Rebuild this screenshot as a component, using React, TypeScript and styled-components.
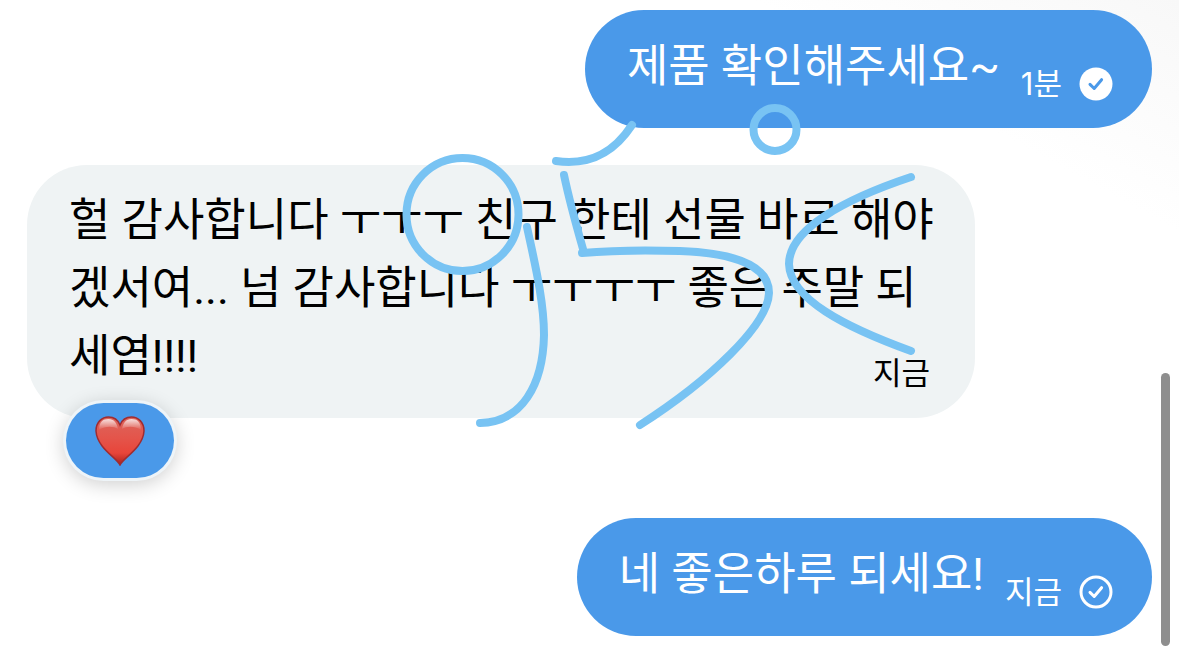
import React from "react";
import styled, { createGlobalStyle } from "styled-components";

const GlobalStyle = createGlobalStyle`
  * { box-sizing: border-box; }
  body {
    margin: 0;
    background: #fff;
    font-family: Roboto, "Noto Sans CJK KR", sans-serif;
  }
`;

const Screen = styled.main`
  position: relative;
  min-height: 100vh;
  padding: 10px 27px;
  background: linear-gradient(to bottom left, #f8f8f8 0%, #fff 18%);
`;

const Thread = styled.ol`
  display: flex;
  flex-direction: column;
  margin: 0;
  padding: 0;
  list-style: none;
`;

const Item = styled.li<{ $sent?: boolean; $gap?: number }>`
  display: flex;
  justify-content: ${(p) => (p.$sent ? "flex-end" : "flex-start")};
  margin-top: ${(p) => p.$gap ?? 0}px;
`;

const SentBubble = styled.article`
  display: flex;
  align-items: flex-end;
  gap: 21px;
  padding: 23px 39px 27px 42px;
  border-radius: 60px;
  background: #4a99e9;
  color: #fff;
`;

const ReceivedBubble = styled.article`
  position: relative;
  display: grid;
  width: 948px;
  max-width: 100%;
  padding: 22px 40px 27px 42px;
  border-radius: 60px;
  background: #eff3f4;
  color: #000;
`;

const Message = styled.p`
  grid-area: 1 / 1;
  margin: 0;
  font-size: 45px;
  line-height: 68px;
`;

const Meta = styled.footer<{ $received?: boolean }>`
  grid-area: 1 / 1;
  align-self: end;
  justify-self: end;
  display: flex;
  align-items: center;
  gap: 17px;
  padding: ${(p) => (p.$received ? "0 5px 2px 0" : "0")};
`;

const Time = styled.time`
  font-family: Inter, "Noto Sans CJK KR", sans-serif;
  font-size: 31px;
  line-height: 32px;
  white-space: nowrap;
`;

const Status = styled.svg`
  flex: none;
  width: 34px;
  height: 34px;
`;

const Reaction = styled.button`
  position: absolute;
  left: 39px;
  bottom: -60px;
  display: grid;
  place-items: center;
  width: 108px;
  height: 75px;
  padding: 0;
  border: 0;
  border-radius: 38px;
  background: #4a99e9;
  box-shadow: 0 0 0 3px #eef4f8, 0 4px 20px 2px rgba(0, 0, 0, 0.2);
`;

const ScrollThumb = styled.div`
  position: absolute;
  top: 373px;
  right: 9px;
  bottom: 0;
  width: 9px;
  border-radius: 5px;
  background: #8e8e8e;
`;

const Doodle = styled.svg`
  position: absolute;
  top: 0;
  left: 0;
  width: 100%;
  pointer-events: none;
`;

const Check = ({ color }: { color: string }) => (
  <path
    d="M11 17.4l4.2 4.1 7.4-8.8"
    fill="none"
    stroke={color}
    strokeWidth="3"
    strokeLinecap="round"
    strokeLinejoin="round"
  />
);

const ReadIcon = () => (
  <Status viewBox="0 0 34 34" role="img" aria-label="읽음">
    <circle cx="17" cy="17" r="16.5" fill="#fff" />
    <Check color="#4a99e9" />
  </Status>
);

const SentIcon = () => (
  <Status viewBox="0 0 34 34" role="img" aria-label="전송됨">
    <circle cx="17" cy="17" r="15" fill="none" stroke="#fff" strokeWidth="3" />
    <Check color="#fff" />
  </Status>
);

const Heart = () => (
  <svg width="50" height="50" viewBox="0 0 50 50" aria-hidden="true">
    <defs>
      <linearGradient id="body" x1="0" y1="0" x2="0" y2="1">
        <stop offset="0" stopColor="#dc665d" />
        <stop offset="0.45" stopColor="#e4544a" />
        <stop offset="0.75" stopColor="#e8453a" />
        <stop offset="1" stopColor="#a8201d" />
      </linearGradient>
      <linearGradient id="shine" x1="0" y1="0" x2="0" y2="1">
        <stop offset="0" stopColor="#fff" stopOpacity="0.8" />
        <stop offset="1" stopColor="#fff" stopOpacity="0" />
      </linearGradient>
    </defs>
    <path
      d="M25 49C22 42 2 32 1 15C1 6 7 1 13.5 1C19 1 23 4 25 9C27 4 31 1 36.5 1C43 1 49 6 49 15C48 32 28 42 25 49Z"
      fill="url(#body)"
      stroke="#a02c30"
      strokeWidth="1.5"
    />
    <path d="M4 14C4 6 8 3 13.5 3C19 3 22 7 23 13C18 10 10 10 4 14Z" fill="url(#shine)" />
    <path d="M46 14C46 6 42 3 36.5 3C31 3 28 7 27 13C32 10 40 10 46 14Z" fill="url(#shine)" />
  </svg>
);

const Scribble = () => (
  <Doodle viewBox="0 0 1179 646" aria-hidden="true">
    <g fill="none" stroke="#78c3f3" strokeWidth="8" strokeLinecap="round" strokeLinejoin="round">
      <ellipse cx="462.5" cy="214.5" rx="56" ry="56.5" />
      <path d="M527 227C534 260 544 300 544 335C543 385 522 422 480 423" />
      <path d="M556 161C592 166 615 151 632 125" />
      <path d="M564 175C569 199 577 228 583 249" />
      <path d="M582 253C615 250 650 250 680 251C735 253 769 266 769 293C768 325 710 380 640 425" />
      <circle cx="775" cy="129.5" r="21.5" />
      <path d="M911 177C845 199 789 229 789 264C790 299 845 327 911 351" />
    </g>
  </Doodle>
);

export default function App() {
  return (
    <>
      <GlobalStyle />
      <Screen>
        <Thread>
          <Item $sent>
            <SentBubble>
              <Message>제품 확인해주세요~</Message>
              <Meta>
                <Time>1분</Time>
                <ReadIcon />
              </Meta>
            </SentBubble>
          </Item>
          <Item $gap={37}>
            <ReceivedBubble>
              <Message>
                헐 감사합니다 ㅜㅜㅜ 친구 한테 선물 바로 해야겠서여... 넘 감사합니다 ㅜㅜㅜㅜ 좋은 주말 되세염!!!!
              </Message>
              <Meta $received>
                <Time>지금</Time>
              </Meta>
              <Reaction type="button" aria-label="하트">
                <Heart />
              </Reaction>
            </ReceivedBubble>
          </Item>
          <Item $sent $gap={100}>
            <SentBubble>
              <Message>네 좋은하루 되세요!</Message>
              <Meta>
                <Time>지금</Time>
                <SentIcon />
              </Meta>
            </SentBubble>
          </Item>
        </Thread>
        <ScrollThumb />
        <Scribble />
      </Screen>
    </>
  );
}
